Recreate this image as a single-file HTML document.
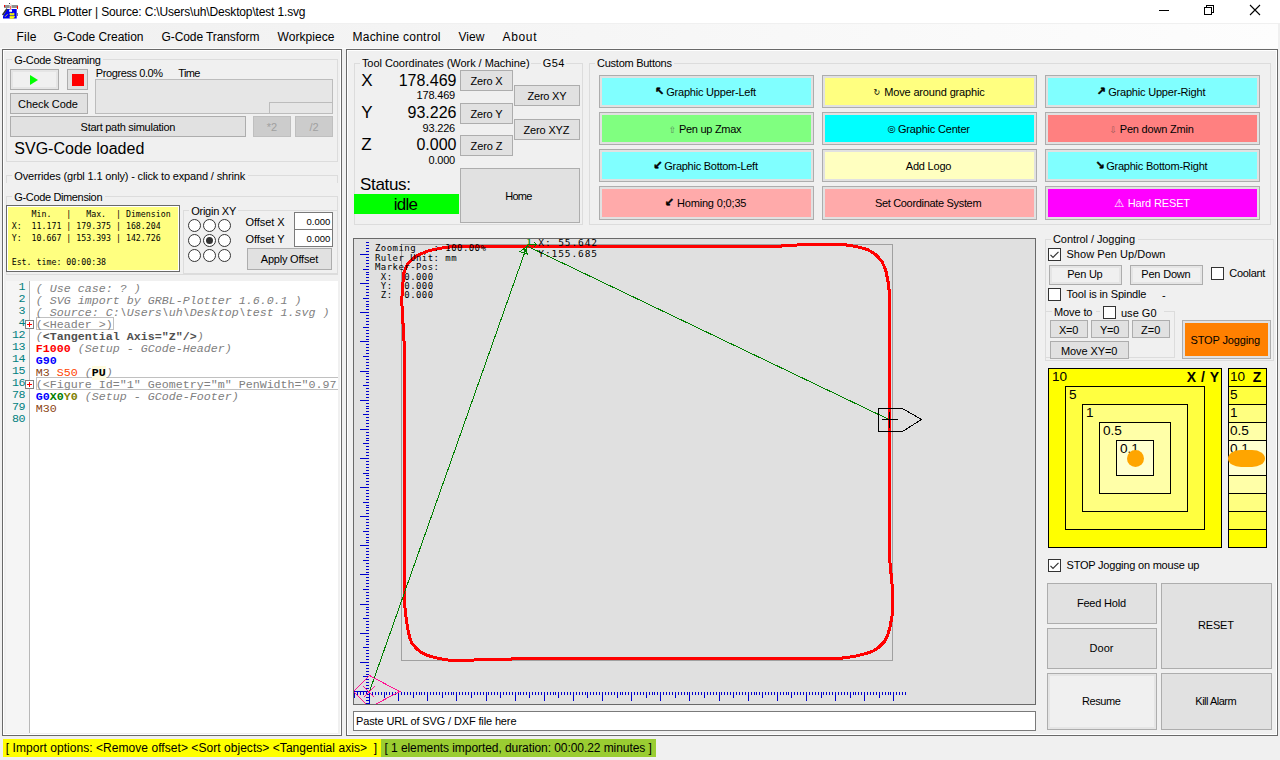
<!DOCTYPE html>
<html lang="en"><head><meta charset="utf-8"><title>GRBL Plotter</title>
<style>
html,body{margin:0;padding:0}
body{width:1280px;height:760px;overflow:hidden;background:#f0f0f0;position:relative;font-family:"Liberation Sans",sans-serif;font-size:11px;color:#000}
div,span.t,svg.a,.a{position:absolute;box-sizing:border-box}
span.t{white-space:pre;display:block}
.gb{border:1px solid #dcdcdc}
.btn{background:#e1e1e1;border:1px solid #adadad}
.btn2{background:#f0f0f0;border:1px solid #adadad;box-shadow:inset 0 0 0 2px #e5e5e5}
.dis{background:#cccccc;border:1px solid #bfbfbf}
.chk{background:#fff;border:1px solid #333}
.rad{background:#fff;border:1px solid #333;border-radius:50%}
.panel{border:1px solid #696969;box-shadow:inset 1px 1px 0 #fff,inset -1px -1px 0 #fff}
.tb{background:#fff;border:1px solid #7a7a7a}

</style></head>
<body>
<div class="" style="left:0px;top:0px;width:1280px;height:23px;background:#fff"></div>
<div class="" style="left:0px;top:23px;width:1278px;height:26px;background:linear-gradient(90deg,#f0f0f0 0%,#fdfdfd 100%);border-top:1px solid #f0f0f0;border-bottom:1px solid #fbfbfb"></div>
<svg class="a" style="left:0;top:0" width="1280" height="23" viewBox="0 0 1280 23"><g shape-rendering="crispEdges"><rect x="4" y="5" width="13.5" height="3" fill="#909090"/><rect x="4" y="5" width="1.3" height="2" fill="#f00"/><rect x="17" y="6" width="1.2" height="3.2" fill="#f00"/><rect x="17" y="13" width="1" height="3" fill="#808080"/></g><path d="M7 9H16.7V18.6H3V16.2Z" fill="#0000f0"/><path d="M7 8.6L2.6 15" stroke="#333" stroke-width="1.6" fill="none"/><rect x="9.6" y="3.8" width="2" height="7" fill="#e8e8e8"/><rect x="10" y="6" width="1" height="3.5" fill="#f66"/><rect x="9.2" y="10" width="2.8" height="1.8" fill="#fff"/><rect x="9" y="3" width="1" height="1" fill="#444"/><path d="M10 13.2Q12 14.3 14 13.2V14.8H10ZM10 16.2H14.6L13.5 18.2H10ZM5 16.8L7.6 14.2" fill="#ffff00" stroke="#ffff00" stroke-width="0.8"/><g fill="none" stroke="#000" stroke-width="1" shape-rendering="crispEdges"><path d="M1159 10.5H1169"/><rect x="1204.5" y="7.5" width="7" height="7"/><path d="M1206.5 7.5V5.5H1213.5V12.5H1211.5"/></g><path d="M1250 5L1260 15M1260 5L1250 15" stroke="#000" stroke-width="1.1" fill="none"/></svg>
<div class="panel" style="left:2px;top:49px;width:340px;height:687px;"></div>
<div class="panel" style="left:346px;top:49px;width:932px;height:687px;"></div>
<div class="gb" style="left:6px;top:59px;width:332px;height:103px;"></div>
<div class="" style="left:12px;top:53px;width:91px;height:13px;background:#f0f0f0"></div>
<div class="btn2" style="left:10px;top:69px;width:49px;height:21px;"><div class="a" style="left:19px;top:5px;width:0;height:0;border-left:8px solid #00ff00;border-top:5.5px solid transparent;border-bottom:5.5px solid transparent"></div></div>
<div class="btn" style="left:67px;top:69px;width:21px;height:21px;"><div class="a" style="left:4px;top:4px;width:12px;height:12px;background:#ff0000"></div></div>
<div class="" style="left:95px;top:79px;width:238px;height:35px;background:#e6e6e6;border:1px solid #bcbcbc"></div>
<div class="" style="left:269px;top:102px;width:64px;height:12px;background:#e6e6e6;border:1px solid #bcbcbc"></div>
<div class="btn" style="left:10px;top:93px;width:78px;height:21px;"></div>
<div class="btn" style="left:10px;top:116px;width:236px;height:21px;"></div>
<div class="dis" style="left:253px;top:116px;width:38px;height:21px;"></div>
<div class="dis" style="left:295px;top:116px;width:38px;height:21px;"></div>
<div class="" style="left:6px;top:175px;width:332px;height:8px;border:1px solid #dcdcdc;border-bottom:none"></div>
<div class="" style="left:12px;top:169px;width:236px;height:13px;background:#f0f0f0"></div>
<div class="gb" style="left:6px;top:196px;width:332px;height:79px;"></div>
<div class="" style="left:12px;top:191px;width:93px;height:13px;background:#f0f0f0"></div>
<div class="" style="left:6px;top:205px;width:174px;height:67px;background:#ffff80;border:1px solid #696969;box-shadow:inset 1px 1px 0 #fff,inset -1px -1px 0 #fff"></div>
<div class="gb" style="left:183px;top:210px;width:155px;height:64px;"></div>
<div class="" style="left:189px;top:204px;width:49px;height:13px;background:#f0f0f0"></div>
<div class="rad" style="left:188.0px;top:219.0px;width:13px;height:13px;"></div>
<div class="rad" style="left:203.0px;top:219.0px;width:13px;height:13px;"></div>
<div class="rad" style="left:218.0px;top:219.0px;width:13px;height:13px;"></div>
<div class="rad" style="left:188.0px;top:234.0px;width:13px;height:13px;"></div>
<div class="rad" style="left:203.0px;top:234.0px;width:13px;height:13px;"><div class="a" style="left:2px;top:2px;width:7px;height:7px;border-radius:50%;background:#333"></div></div>
<div class="rad" style="left:218.0px;top:234.0px;width:13px;height:13px;"></div>
<div class="rad" style="left:188.0px;top:249.0px;width:13px;height:13px;"></div>
<div class="rad" style="left:203.0px;top:249.0px;width:13px;height:13px;"></div>
<div class="rad" style="left:218.0px;top:249.0px;width:13px;height:13px;"></div>
<div class="tb" style="left:294px;top:212px;width:39px;height:18px;"></div>
<div class="tb" style="left:294px;top:229px;width:39px;height:18px;"></div>
<div class="btn" style="left:247px;top:248px;width:85px;height:22px;"></div>
<div class="" style="left:6px;top:281px;width:332px;height:452px;background:#fff"></div>
<div class="" style="left:6px;top:281px;width:23px;height:452px;background:#f5f5f5"></div>
<div class="" style="left:29px;top:281px;width:1px;height:452px;background:#b8b8b8"></div>
<div class="clip" style="left:36px;top:281px;width:302px;height:452px;overflow:hidden"></div>
<div class="" style="left:25px;top:320px;width:9px;height:9px;background:#fff;border:1px solid #808080"><div class="a" style="left:1px;top:3px;width:5px;height:1px;background:#f00"></div><div class="a" style="left:3px;top:1px;width:1px;height:5px;background:#f00"></div></div>
<div class="" style="left:25px;top:380px;width:9px;height:9px;background:#fff;border:1px solid #808080"><div class="a" style="left:1px;top:3px;width:5px;height:1px;background:#f00"></div><div class="a" style="left:3px;top:1px;width:1px;height:5px;background:#f00"></div></div>
<div class="" style="left:36px;top:317px;width:78px;height:13px;border:1px solid #c0c0c0"></div>
<div class="" style="left:36px;top:377px;width:310px;height:13px;border:1px solid #c0c0c0;border-right:none;width:302px"></div>
<div class="gb" style="left:354px;top:63px;width:229px;height:162px;"></div>
<div class="" style="left:360px;top:57px;width:171px;height:13px;background:#f0f0f0"></div>
<div class="" style="left:541px;top:57px;width:25px;height:13px;background:#f0f0f0"></div>
<div class="btn" style="left:460px;top:70px;width:53px;height:21px;"></div>
<div class="btn" style="left:460px;top:103px;width:53px;height:21px;"></div>
<div class="btn" style="left:460px;top:135px;width:53px;height:21px;"></div>
<div class="btn" style="left:514px;top:85px;width:66px;height:21px;"></div>
<div class="btn" style="left:514px;top:119px;width:66px;height:21px;"></div>
<div class="btn" style="left:460px;top:168px;width:120px;height:55px;"></div>
<div class="" style="left:354px;top:194px;width:105px;height:20px;background:#00ff00"></div>
<div class="gb" style="left:589px;top:63px;width:682px;height:162px;"></div>
<div class="" style="left:595px;top:57px;width:79px;height:13px;background:#f0f0f0"></div>
<div class="btn" style="left:599px;top:75px;width:215px;height:33px;"><div class="a" style="left:2px;top:2px;right:2px;bottom:2px;background:#80ffff"></div></div>
<div class="btn" style="left:822px;top:75px;width:215px;height:33px;"><div class="a" style="left:2px;top:2px;right:2px;bottom:2px;background:#ffff80"></div></div>
<div class="btn" style="left:1045px;top:75px;width:215px;height:33px;"><div class="a" style="left:2px;top:2px;right:2px;bottom:2px;background:#80ffff"></div></div>
<div class="btn" style="left:599px;top:112px;width:215px;height:33px;"><div class="a" style="left:2px;top:2px;right:2px;bottom:2px;background:#80ff80"></div></div>
<div class="btn" style="left:822px;top:112px;width:215px;height:33px;"><div class="a" style="left:2px;top:2px;right:2px;bottom:2px;background:#00ffff"></div></div>
<div class="btn" style="left:1045px;top:112px;width:215px;height:33px;"><div class="a" style="left:2px;top:2px;right:2px;bottom:2px;background:#ff8080"></div></div>
<div class="btn" style="left:599px;top:149px;width:215px;height:33px;"><div class="a" style="left:2px;top:2px;right:2px;bottom:2px;background:#80ffff"></div></div>
<div class="btn" style="left:822px;top:149px;width:215px;height:33px;"><div class="a" style="left:2px;top:2px;right:2px;bottom:2px;background:#ffffc0"></div></div>
<div class="btn" style="left:1045px;top:149px;width:215px;height:33px;"><div class="a" style="left:2px;top:2px;right:2px;bottom:2px;background:#80ffff"></div></div>
<div class="btn" style="left:599px;top:186px;width:215px;height:34px;"><div class="a" style="left:2px;top:2px;right:2px;bottom:2px;background:#ffaaaa"></div></div>
<div class="btn" style="left:822px;top:186px;width:215px;height:34px;"><div class="a" style="left:2px;top:2px;right:2px;bottom:2px;background:#ffaaaa"></div></div>
<div class="btn" style="left:1045px;top:186px;width:215px;height:34px;"><div class="a" style="left:2px;top:2px;right:2px;bottom:2px;background:#ff00ff"></div></div>
<div class="" style="left:353px;top:238px;width:683px;height:467px;background:#e0e0e0;border:1px solid #696969"></div>
<div class="tb" style="left:353px;top:711px;width:683px;height:20px;"></div>
<div class="gb" style="left:1045px;top:239px;width:229px;height:122px;"></div>
<div class="" style="left:1051px;top:233px;width:87px;height:13px;background:#f0f0f0"></div>
<div class="chk" style="left:1048px;top:248px;width:13px;height:13px;"><svg class="a" style="left:0;top:0" width="11" height="11" viewBox="0 0 11 11"><path d="M1.5 5.8 L4 8.3 L9.5 2.8" fill="none" stroke="#333" stroke-width="1.2"/></svg></div>
<div class="btn2" style="left:1049px;top:265px;width:73px;height:20px;"></div>
<div class="btn2" style="left:1130px;top:265px;width:73px;height:20px;"></div>
<div class="chk" style="left:1211px;top:267px;width:13px;height:13px;"></div>
<div class="chk" style="left:1048px;top:288px;width:13px;height:13px;"></div>
<div class="gb" style="left:1045px;top:311px;width:130px;height:47px;"></div>
<div class="" style="left:1052px;top:305px;width:44px;height:13px;background:#f0f0f0"></div>
<div class="" style="left:1100px;top:305px;width:64px;height:13px;background:#f0f0f0"></div>
<div class="chk" style="left:1103px;top:306px;width:13px;height:13px;"></div>
<div class="btn" style="left:1050px;top:320px;width:38px;height:18px;"></div>
<div class="btn" style="left:1091px;top:320px;width:38px;height:18px;"></div>
<div class="btn" style="left:1132px;top:320px;width:38px;height:18px;"></div>
<div class="btn" style="left:1050px;top:341px;width:79px;height:18px;"></div>
<div class="btn" style="left:1182px;top:320px;width:89px;height:39px;"><div class="a" style="left:2px;top:2px;right:2px;bottom:2px;background:#ff8000"></div></div>
<div class="" style="left:1048px;top:368px;width:174px;height:180px;background:#ffff00;border:1px solid #000"></div>
<div class="" style="left:1065px;top:386px;width:140px;height:144px;background:#ffff40;border:1px solid #000"></div>
<div class="" style="left:1082px;top:404px;width:106px;height:108px;background:#ffff80;border:1px solid #000"></div>
<div class="" style="left:1099px;top:422px;width:72px;height:72px;background:#ffffa8;border:1px solid #000"></div>
<div class="" style="left:1116px;top:440px;width:38px;height:36px;background:#ffffd0;border:1px solid #000"></div>
<div class="" style="left:1228px;top:368px;width:39px;height:180px;background:#ffff00;border:1px solid #000"></div>
<div class="" style="left:1229px;top:369px;width:37px;height:18px;background:#ffff00;border-bottom:1px solid #000"></div>
<div class="" style="left:1229px;top:387px;width:37px;height:18px;background:#ffff40;border-bottom:1px solid #000"></div>
<div class="" style="left:1229px;top:405px;width:37px;height:18px;background:#ffff80;border-bottom:1px solid #000"></div>
<div class="" style="left:1229px;top:423px;width:37px;height:18px;background:#ffffa8;border-bottom:1px solid #000"></div>
<div class="" style="left:1229px;top:441px;width:37px;height:35px;background:#ffffd0;border-bottom:1px solid #000"></div>
<div class="" style="left:1229px;top:476px;width:37px;height:18px;background:#ffffa8;border-bottom:1px solid #000"></div>
<div class="" style="left:1229px;top:494px;width:37px;height:18px;background:#ffff80;border-bottom:1px solid #000"></div>
<div class="" style="left:1229px;top:512px;width:37px;height:18px;background:#ffff40;border-bottom:1px solid #000"></div>
<div class="" style="left:1229px;top:530px;width:37px;height:17px;background:#ffff00"></div>
<div class="chk" style="left:1048px;top:559px;width:13px;height:13px;"><svg class="a" style="left:0;top:0" width="11" height="11" viewBox="0 0 11 11"><path d="M1.5 5.8 L4 8.3 L9.5 2.8" fill="none" stroke="#333" stroke-width="1.2"/></svg></div>
<div class="btn" style="left:1047px;top:583px;width:110px;height:41px;"></div>
<div class="btn" style="left:1047px;top:628px;width:110px;height:41px;"></div>
<div class="btn" style="left:1161px;top:583px;width:111px;height:86px;"></div>
<div class="btn2" style="left:1047px;top:673px;width:110px;height:57px;"></div>
<div class="btn" style="left:1161px;top:673px;width:111px;height:57px;"></div>
<div class="" style="left:3px;top:739px;width:378px;height:18px;background:#ffff00"></div>
<div class="" style="left:381px;top:739px;width:275px;height:18px;background:#9acd32"></div>
<svg class="a" style="left:354px;top:239px" width="681" height="465" viewBox="354 239 681 465">
<rect x="401.5" y="244.5" width="491" height="416" fill="none" stroke="#a0a0a0" stroke-width="1" shape-rendering="crispEdges"/>
<path d="M369.50 692.0v9M372.41 692.0v3M375.33 692.0v3M378.24 692.0v3M381.15 692.0v3M384.06 692.0v6M386.98 692.0v3M389.89 692.0v3M392.80 692.0v3M395.72 692.0v3M398.63 692.0v9M401.54 692.0v3M404.46 692.0v3M407.37 692.0v3M410.28 692.0v3M413.19 692.0v6M416.11 692.0v3M419.02 692.0v3M421.93 692.0v3M424.85 692.0v3M427.76 692.0v9M430.67 692.0v3M433.59 692.0v3M436.50 692.0v3M439.41 692.0v3M442.32 692.0v6M445.24 692.0v3M448.15 692.0v3M451.06 692.0v3M453.98 692.0v3M456.89 692.0v9M459.80 692.0v3M462.72 692.0v3M465.63 692.0v3M468.54 692.0v3M471.45 692.0v6M474.37 692.0v3M477.28 692.0v3M480.19 692.0v3M483.11 692.0v3M486.02 692.0v9M488.93 692.0v3M491.85 692.0v3M494.76 692.0v3M497.67 692.0v3M500.58 692.0v6M503.50 692.0v3M506.41 692.0v3M509.32 692.0v3M512.24 692.0v3M515.15 692.0v9M518.06 692.0v3M520.98 692.0v3M523.89 692.0v3M526.80 692.0v3M529.72 692.0v6M532.63 692.0v3M535.54 692.0v3M538.45 692.0v3M541.37 692.0v3M544.28 692.0v9M547.19 692.0v3M550.11 692.0v3M553.02 692.0v3M555.93 692.0v3M558.85 692.0v6M561.76 692.0v3M564.67 692.0v3M567.58 692.0v3M570.50 692.0v3M573.41 692.0v9M576.32 692.0v3M579.24 692.0v3M582.15 692.0v3M585.06 692.0v3M587.98 692.0v6M590.89 692.0v3M593.80 692.0v3M596.71 692.0v3M599.63 692.0v3M602.54 692.0v9M605.45 692.0v3M608.37 692.0v3M611.28 692.0v3M614.19 692.0v3M617.11 692.0v6M620.02 692.0v3M622.93 692.0v3M625.84 692.0v3M628.76 692.0v3M631.67 692.0v9M634.58 692.0v3M637.50 692.0v3M640.41 692.0v3M643.32 692.0v3M646.23 692.0v6M649.15 692.0v3M652.06 692.0v3M654.97 692.0v3M657.89 692.0v3M660.80 692.0v9M663.71 692.0v3M666.63 692.0v3M669.54 692.0v3M672.45 692.0v3M675.37 692.0v6M678.28 692.0v3M681.19 692.0v3M684.10 692.0v3M687.02 692.0v3M689.93 692.0v9M692.84 692.0v3M695.76 692.0v3M698.67 692.0v3M701.58 692.0v3M704.50 692.0v6M707.41 692.0v3M710.32 692.0v3M713.23 692.0v3M716.15 692.0v3M719.06 692.0v9M721.97 692.0v3M724.89 692.0v3M727.80 692.0v3M730.71 692.0v3M733.62 692.0v6M736.54 692.0v3M739.45 692.0v3M742.36 692.0v3M745.28 692.0v3M748.19 692.0v9M751.10 692.0v3M754.02 692.0v3M756.93 692.0v3M759.84 692.0v3M762.75 692.0v6M765.67 692.0v3M768.58 692.0v3M771.49 692.0v3M774.41 692.0v3M777.32 692.0v9M780.23 692.0v3M783.15 692.0v3M786.06 692.0v3M788.97 692.0v3M791.88 692.0v6M794.80 692.0v3M797.71 692.0v3M800.62 692.0v3M803.54 692.0v3M806.45 692.0v9M809.36 692.0v3M812.28 692.0v3M815.19 692.0v3M818.10 692.0v3M821.01 692.0v6M823.93 692.0v3M826.84 692.0v3M829.75 692.0v3M832.67 692.0v3M835.58 692.0v9M838.49 692.0v3M841.41 692.0v3M844.32 692.0v3M847.23 692.0v3M850.14 692.0v6M853.06 692.0v3M855.97 692.0v3M858.88 692.0v3M861.80 692.0v3M864.71 692.0v9M867.62 692.0v3M870.54 692.0v3M873.45 692.0v3M876.36 692.0v3M879.27 692.0v6M882.19 692.0v3M885.10 692.0v3M888.01 692.0v3M890.93 692.0v3M893.84 692.0v9M896.75 692.0v3M899.67 692.0v3M902.58 692.0v3M905.49 692.0v3M369.0 691.50h-9M369.0 688.59h-3M369.0 685.67h-3M369.0 682.76h-3M369.0 679.85h-3M369.0 676.93h-6M369.0 674.02h-3M369.0 671.11h-3M369.0 668.20h-3M369.0 665.28h-3M369.0 662.37h-9M369.0 659.46h-3M369.0 656.54h-3M369.0 653.63h-3M369.0 650.72h-3M369.0 647.80h-6M369.0 644.89h-3M369.0 641.98h-3M369.0 639.07h-3M369.0 636.15h-3M369.0 633.24h-9M369.0 630.33h-3M369.0 627.41h-3M369.0 624.50h-3M369.0 621.59h-3M369.0 618.67h-6M369.0 615.76h-3M369.0 612.85h-3M369.0 609.94h-3M369.0 607.02h-3M369.0 604.11h-9M369.0 601.20h-3M369.0 598.28h-3M369.0 595.37h-3M369.0 592.46h-3M369.0 589.54h-6M369.0 586.63h-3M369.0 583.72h-3M369.0 580.81h-3M369.0 577.89h-3M369.0 574.98h-9M369.0 572.07h-3M369.0 569.15h-3M369.0 566.24h-3M369.0 563.33h-3M369.0 560.41h-6M369.0 557.50h-3M369.0 554.59h-3M369.0 551.68h-3M369.0 548.76h-3M369.0 545.85h-9M369.0 542.94h-3M369.0 540.02h-3M369.0 537.11h-3M369.0 534.20h-3M369.0 531.28h-6M369.0 528.37h-3M369.0 525.46h-3M369.0 522.55h-3M369.0 519.63h-3M369.0 516.72h-9M369.0 513.81h-3M369.0 510.89h-3M369.0 507.98h-3M369.0 505.07h-3M369.0 502.15h-6M369.0 499.24h-3M369.0 496.33h-3M369.0 493.42h-3M369.0 490.50h-3M369.0 487.59h-9M369.0 484.68h-3M369.0 481.76h-3M369.0 478.85h-3M369.0 475.94h-3M369.0 473.02h-6M369.0 470.11h-3M369.0 467.20h-3M369.0 464.29h-3M369.0 461.37h-3M369.0 458.46h-9M369.0 455.55h-3M369.0 452.63h-3M369.0 449.72h-3M369.0 446.81h-3M369.0 443.89h-6M369.0 440.98h-3M369.0 438.07h-3M369.0 435.16h-3M369.0 432.24h-3M369.0 429.33h-9M369.0 426.42h-3M369.0 423.50h-3M369.0 420.59h-3M369.0 417.68h-3M369.0 414.77h-6M369.0 411.85h-3M369.0 408.94h-3M369.0 406.03h-3M369.0 403.11h-3M369.0 400.20h-9M369.0 397.29h-3M369.0 394.37h-3M369.0 391.46h-3M369.0 388.55h-3M369.0 385.64h-6M369.0 382.72h-3M369.0 379.81h-3M369.0 376.90h-3M369.0 373.98h-3M369.0 371.07h-9M369.0 368.16h-3M369.0 365.24h-3M369.0 362.33h-3M369.0 359.42h-3M369.0 356.50h-6M369.0 353.59h-3M369.0 350.68h-3M369.0 347.77h-3M369.0 344.85h-3M369.0 341.94h-9M369.0 339.03h-3M369.0 336.11h-3M369.0 333.20h-3M369.0 330.29h-3M369.0 327.38h-6M369.0 324.46h-3M369.0 321.55h-3M369.0 318.64h-3M369.0 315.72h-3M369.0 312.81h-9M369.0 309.90h-3M369.0 306.98h-3M369.0 304.07h-3M369.0 301.16h-3M369.0 298.25h-6M369.0 295.33h-3M369.0 292.42h-3M369.0 289.51h-3M369.0 286.59h-3M369.0 283.68h-9M369.0 280.77h-3M369.0 277.85h-3M369.0 274.94h-3M369.0 272.03h-3M369.0 269.12h-6M369.0 266.20h-3M369.0 263.29h-3M369.0 260.38h-3M369.0 257.46h-3M369.0 254.55h-9M369.0 251.64h-3M369.0 248.72h-3M369.0 245.81h-3M369.0 242.90h-3M366.59 692.0v3M363.67 692.0v3M360.76 692.0v3M357.85 692.0v3M354.94 692.0v6M370.0 694.41h-4M370.0 697.33h-4M370.0 700.24h-4M370.0 703.15h-4" stroke="#0000cd" stroke-width="1" fill="none" shape-rendering="crispEdges"/>
<path d="M354 691.5H370.0M369.5 691.5V704" stroke="#0000cd" stroke-width="1.4" fill="none" shape-rendering="crispEdges"/>
<path d="M527 246.4 L775 246.4 L790 245.5 L803 244.6 L843.7 244.5 L849.2 245.5 L856.3 246.5 L867.4 249.5 L875.3 254.2 L881.6 260.9 L885.6 269.6 L887.9 280.7 L889.5 293.3 L889.7 560 L892.6 590 L892.6 612 L891.9 616.6 L890 627 L887.9 634.5 L884.2 641.8 L879 647.1 L872.6 651.3 L864.2 654 L855.8 656 L846.3 657.6 L839 658.4 L520 658.5 L500 659.7 L449.7 660.3 L443.4 659.2 L435 657.6 L427.6 655.5 L421.3 652.4 L416 648.2 L411.8 642.9 L409.7 637.6 L407.4 627 L406 616.6 L404.8 606 L404.5 585 L404.5 350 L401.7 300 L403.7 273 L407.6 263.7 L416.3 255.8 L429 250.6 L446.3 247.2 L460 246.4 Z" fill="none" stroke="#ff0000" stroke-width="3" stroke-linejoin="round" shape-rendering="crispEdges"/>
<g font-family="'DejaVu Sans Mono', monospace" font-size="9" letter-spacing="0.44" fill="#000" style="white-space:pre">
<text x="375" y="251.3">Zooming   : 100.00%</text>
<text x="375" y="260.7">Ruler Unit: mm</text>
<text x="375" y="270.1">Marker-Pos:</text>
<text x="375" y="279.5"> X:  0.000</text>
<text x="375" y="288.9"> Y:  0.000</text>
<text x="375" y="298.3"> Z:  0.000</text>
</g>
<path d="M369.5 691.5L527 246L889 419.5" fill="none" stroke="#008000" stroke-width="1" shape-rendering="crispEdges"/>
<path d="M526.2 247L520 251.6L527.2 254.2ZM524.6 248.6V252.5M526.5 246.5L528.5 244.5H536.5M534.5 242.5L536.8 244.5L534.5 246.8" fill="none" stroke="#008000" stroke-width="1" shape-rendering="crispEdges"/>
<text x="526.6" y="245.2" font-family="'DejaVu Sans Mono', monospace" font-size="8.5" font-weight="bold" fill="#008000">1</text>
<g font-family="'DejaVu Sans Mono', monospace" font-size="9.5" letter-spacing="0.9" fill="#000" style="white-space:pre">
<text x="538.3" y="245.8">X: 55.642</text><text x="538.3" y="256.8">Y:155.685</text></g>
<path d="M353.5 691.5L369.5 675.5L399.5 691.5L369.5 707.5ZM363.5 686.5l11 11M374.5 686.5l-11 11" fill="none" stroke="#ff1493" stroke-width="1" shape-rendering="crispEdges"/>
<path d="M878.5 408.5H902.5L921.5 419.5L902.5 431.5H878.5ZM882 419.5h16M889.5 411.5v16" fill="none" stroke="#000" stroke-width="1" shape-rendering="crispEdges"/>
</svg>
<span class="t" style="font-family:'Liberation Sans', sans-serif;font-size:12px;color:#000;letter-spacing:-0.156px;left:23.50px;top:3.50px;line-height:16px;">GRBL Plotter | Source: C:\Users\uh\Desktop\test 1.svg</span>
<span class="t" style="font-family:'Liberation Sans', sans-serif;font-size:12px;color:#000;letter-spacing:0.219px;left:16.50px;top:28.50px;line-height:16px;">File</span>
<span class="t" style="font-family:'Liberation Sans', sans-serif;font-size:12px;color:#000;letter-spacing:-0.051px;left:53.50px;top:28.50px;line-height:16px;">G-Code Creation</span>
<span class="t" style="font-family:'Liberation Sans', sans-serif;font-size:12px;color:#000;letter-spacing:-0.092px;left:161.50px;top:28.50px;line-height:16px;">G-Code Transform</span>
<span class="t" style="font-family:'Liberation Sans', sans-serif;font-size:12px;color:#000;letter-spacing:0.066px;left:277.50px;top:28.50px;line-height:16px;">Workpiece</span>
<span class="t" style="font-family:'Liberation Sans', sans-serif;font-size:12px;color:#000;letter-spacing:0.234px;left:352.50px;top:28.50px;line-height:16px;">Machine control</span>
<span class="t" style="font-family:'Liberation Sans', sans-serif;font-size:12px;color:#000;letter-spacing:0.068px;left:458.50px;top:28.50px;line-height:16px;">View</span>
<span class="t" style="font-family:'Liberation Sans', sans-serif;font-size:12px;color:#000;letter-spacing:0.660px;left:502.50px;top:28.50px;line-height:16px;">About</span>
<span class="t" style="font-family:'Liberation Sans', sans-serif;font-size:11px;color:#000;letter-spacing:-0.348px;left:14.30px;top:52.50px;line-height:14px;">G-Code Streaming</span>
<span class="t" style="font-family:'Liberation Sans', sans-serif;font-size:11px;color:#000;letter-spacing:-0.405px;left:95.80px;top:65.50px;line-height:14px;">Progress 0.0%</span>
<span class="t" style="font-family:'Liberation Sans', sans-serif;font-size:11px;color:#000;letter-spacing:-0.616px;left:178.20px;top:65.50px;line-height:14px;">Time</span>
<span class="t" style="font-family:'Liberation Sans', sans-serif;font-size:11px;color:#000;letter-spacing:-0.061px;left:18.00px;top:96.50px;line-height:14px;">Check Code</span>
<span class="t" style="font-family:'Liberation Sans', sans-serif;font-size:11px;color:#000;letter-spacing:-0.274px;left:80.60px;top:119.50px;line-height:14px;">Start path simulation</span>
<span class="t" style="font-family:'Liberation Sans', sans-serif;font-size:11px;color:#a0a0a0;left:266.80px;top:119.50px;line-height:14px;">*2</span>
<span class="t" style="font-family:'Liberation Sans', sans-serif;font-size:11px;color:#a0a0a0;left:309.41px;top:119.50px;line-height:14px;">/2</span>
<span class="t" style="font-family:'Liberation Sans', sans-serif;font-size:16px;color:#000;letter-spacing:0.010px;left:14.30px;top:137.90px;line-height:21px;">SVG-Code loaded</span>
<span class="t" style="font-family:'Liberation Sans', sans-serif;font-size:11px;color:#000;letter-spacing:-0.160px;left:14.30px;top:168.90px;line-height:14px;">Overrides (grbl 1.1 only) - click to expand / shrink</span>
<span class="t" style="font-family:'Liberation Sans', sans-serif;font-size:11px;color:#000;letter-spacing:-0.356px;left:14.30px;top:190.30px;line-height:14px;">G-Code Dimension</span>
<span class="t" style="font-family:'DejaVu Sans Mono', monospace;font-size:8.25px;color:#000;left:11.70px;top:208.50px;line-height:11px;">    Min.   |   Max.  | Dimension</span>
<span class="t" style="font-family:'DejaVu Sans Mono', monospace;font-size:8.25px;color:#000;left:11.70px;top:220.50px;line-height:11px;">X:  11.171 | 179.375 | 168.204</span>
<span class="t" style="font-family:'DejaVu Sans Mono', monospace;font-size:8.25px;color:#000;left:11.70px;top:232.50px;line-height:11px;">Y:  10.667 | 153.393 | 142.726</span>
<span class="t" style="font-family:'DejaVu Sans Mono', monospace;font-size:8.25px;color:#000;left:11.70px;top:256.50px;line-height:11px;">Est. time: 00:00:38</span>
<span class="t" style="font-family:'Liberation Sans', sans-serif;font-size:11px;color:#000;letter-spacing:-0.247px;left:191.20px;top:203.80px;line-height:14px;">Origin XY</span>
<span class="t" style="font-family:'Liberation Sans', sans-serif;font-size:11px;color:#000;letter-spacing:-0.078px;left:245.50px;top:215.40px;line-height:14px;">Offset X</span>
<span class="t" style="font-family:'Liberation Sans', sans-serif;font-size:11px;color:#000;letter-spacing:-0.049px;left:245.50px;top:232.30px;line-height:14px;">Offset Y</span>
<span class="t" style="font-family:'Liberation Sans', sans-serif;font-size:9.5px;color:#000;left:306.52px;top:215.50px;line-height:12px;">0.000</span>
<span class="t" style="font-family:'Liberation Sans', sans-serif;font-size:9.5px;color:#000;left:306.52px;top:232.50px;line-height:12px;">0.000</span>
<span class="t" style="font-family:'Liberation Sans', sans-serif;font-size:11px;color:#000;letter-spacing:-0.202px;left:260.75px;top:252.00px;line-height:14px;">Apply Offset</span>
<span class="t" style="font-family:'Liberation Mono', monospace;font-size:11.667px;color:#008080;left:18.50px;top:280.20px;line-height:15px;letter-spacing:-0.5px;">1</span>
<span class="t" style="font-family:'Liberation Mono', monospace;font-size:11.667px;color:#000;left:35.80px;top:281.70px;line-height:15px;max-width:301.5px;overflow:hidden;"><i style="color:#808080">( Use case: ? )</i></span>
<span class="t" style="font-family:'Liberation Mono', monospace;font-size:11.667px;color:#008080;left:18.50px;top:292.20px;line-height:15px;letter-spacing:-0.5px;">2</span>
<span class="t" style="font-family:'Liberation Mono', monospace;font-size:11.667px;color:#000;left:35.80px;top:293.70px;line-height:15px;max-width:301.5px;overflow:hidden;"><i style="color:#808080">( SVG import by GRBL-Plotter 1.6.0.1 )</i></span>
<span class="t" style="font-family:'Liberation Mono', monospace;font-size:11.667px;color:#008080;left:18.50px;top:304.20px;line-height:15px;letter-spacing:-0.5px;">3</span>
<span class="t" style="font-family:'Liberation Mono', monospace;font-size:11.667px;color:#000;left:35.80px;top:305.70px;line-height:15px;max-width:301.5px;overflow:hidden;"><i style="color:#808080">( Source: C:\Users\uh\Desktop\test 1.svg )</i></span>
<span class="t" style="font-family:'Liberation Mono', monospace;font-size:11.667px;color:#008080;left:18.50px;top:316.20px;line-height:15px;letter-spacing:-0.5px;">4</span>
<span class="t" style="font-family:'Liberation Mono', monospace;font-size:11.667px;color:#000;left:35.80px;top:317.70px;line-height:15px;max-width:301.5px;overflow:hidden;"><span style="color:#808080">(&lt;Header &gt;)</span></span>
<span class="t" style="font-family:'Liberation Mono', monospace;font-size:11.667px;color:#008080;left:12.00px;top:328.20px;line-height:15px;letter-spacing:-0.5px;">12</span>
<span class="t" style="font-family:'Liberation Mono', monospace;font-size:11.667px;color:#000;left:35.80px;top:329.70px;line-height:15px;max-width:301.5px;overflow:hidden;"><i style="color:#808080">(</i><b style="color:#505050">&lt;Tangential Axis="Z"/&gt;</b><i style="color:#808080">)</i></span>
<span class="t" style="font-family:'Liberation Mono', monospace;font-size:11.667px;color:#008080;left:12.00px;top:340.20px;line-height:15px;letter-spacing:-0.5px;">13</span>
<span class="t" style="font-family:'Liberation Mono', monospace;font-size:11.667px;color:#000;left:35.80px;top:341.70px;line-height:15px;max-width:301.5px;overflow:hidden;"><b style="color:#ff0000">F1000</b> <i style="color:#808080">(Setup - GCode-Header)</i></span>
<span class="t" style="font-family:'Liberation Mono', monospace;font-size:11.667px;color:#008080;left:12.00px;top:352.20px;line-height:15px;letter-spacing:-0.5px;">14</span>
<span class="t" style="font-family:'Liberation Mono', monospace;font-size:11.667px;color:#000;left:35.80px;top:353.70px;line-height:15px;max-width:301.5px;overflow:hidden;"><b style="color:#0000ff">G90</b></span>
<span class="t" style="font-family:'Liberation Mono', monospace;font-size:11.667px;color:#008080;left:12.00px;top:364.20px;line-height:15px;letter-spacing:-0.5px;">15</span>
<span class="t" style="font-family:'Liberation Mono', monospace;font-size:11.667px;color:#000;left:35.80px;top:365.70px;line-height:15px;max-width:301.5px;overflow:hidden;"><span style="color:#8b4513">M3</span> <span style="color:#ff4500">S50</span> <i style="color:#808080">(</i><b style="color:#000;background:#fffbe0">PU</b><i style="color:#808080">)</i></span>
<span class="t" style="font-family:'Liberation Mono', monospace;font-size:11.667px;color:#008080;left:12.00px;top:376.20px;line-height:15px;letter-spacing:-0.5px;">16</span>
<span class="t" style="font-family:'Liberation Mono', monospace;font-size:11.667px;color:#000;left:35.80px;top:377.70px;line-height:15px;max-width:301.5px;overflow:hidden;"><span style="color:#808080">(&lt;Figure Id="1" Geometry="m" PenWidth="0.97</span></span>
<span class="t" style="font-family:'Liberation Mono', monospace;font-size:11.667px;color:#008080;left:12.00px;top:388.20px;line-height:15px;letter-spacing:-0.5px;">78</span>
<span class="t" style="font-family:'Liberation Mono', monospace;font-size:11.667px;color:#000;left:35.80px;top:389.70px;line-height:15px;max-width:301.5px;overflow:hidden;"><b style="color:#0000ff">G0</b><b style="color:#008000">X0</b><b style="color:#808000">Y0</b> <i style="color:#808080">(Setup - GCode-Footer)</i></span>
<span class="t" style="font-family:'Liberation Mono', monospace;font-size:11.667px;color:#008080;left:12.00px;top:400.20px;line-height:15px;letter-spacing:-0.5px;">79</span>
<span class="t" style="font-family:'Liberation Mono', monospace;font-size:11.667px;color:#000;left:35.80px;top:401.70px;line-height:15px;max-width:301.5px;overflow:hidden;"><span style="color:#8b4513">M30</span></span>
<span class="t" style="font-family:'Liberation Mono', monospace;font-size:11.667px;color:#008080;left:12.00px;top:412.20px;line-height:15px;letter-spacing:-0.5px;">80</span>
<span class="t" style="font-family:'Liberation Sans', sans-serif;font-size:11px;color:#000;letter-spacing:-0.046px;left:361.90px;top:55.90px;line-height:14px;">Tool Coordinates (Work / Machine)</span>
<span class="t" style="font-family:'Liberation Sans', sans-serif;font-size:11px;color:#000;letter-spacing:0.502px;left:542.70px;top:55.90px;line-height:14px;">G54</span>
<span class="t" style="font-family:'Liberation Sans', sans-serif;font-size:17px;color:#000;left:361.20px;top:69.50px;line-height:22px;">X</span>
<span class="t" style="font-family:'Liberation Sans', sans-serif;font-size:16px;color:#000;left:398.66px;top:70.00px;line-height:21px;">178.469</span>
<span class="t" style="font-family:'Liberation Sans', sans-serif;font-size:11px;color:#000;left:416.62px;top:88.00px;line-height:14px;letter-spacing:-0.2px;">178.469</span>
<span class="t" style="font-family:'Liberation Sans', sans-serif;font-size:17px;color:#000;left:361.20px;top:101.50px;line-height:22px;">Y</span>
<span class="t" style="font-family:'Liberation Sans', sans-serif;font-size:16px;color:#000;left:407.56px;top:102.00px;line-height:21px;">93.226</span>
<span class="t" style="font-family:'Liberation Sans', sans-serif;font-size:11px;color:#000;left:422.55px;top:120.70px;line-height:14px;letter-spacing:-0.2px;">93.226</span>
<span class="t" style="font-family:'Liberation Sans', sans-serif;font-size:17px;color:#000;left:361.20px;top:133.50px;line-height:22px;">Z</span>
<span class="t" style="font-family:'Liberation Sans', sans-serif;font-size:16px;color:#000;left:416.45px;top:134.00px;line-height:21px;">0.000</span>
<span class="t" style="font-family:'Liberation Sans', sans-serif;font-size:11px;color:#000;left:428.47px;top:153.10px;line-height:14px;letter-spacing:-0.2px;">0.000</span>
<span class="t" style="font-family:'Liberation Sans', sans-serif;font-size:11px;color:#000;letter-spacing:-0.203px;left:470.50px;top:73.50px;line-height:14px;">Zero X</span>
<span class="t" style="font-family:'Liberation Sans', sans-serif;font-size:11px;color:#000;letter-spacing:-0.163px;left:470.50px;top:106.50px;line-height:14px;">Zero Y</span>
<span class="t" style="font-family:'Liberation Sans', sans-serif;font-size:11px;color:#000;letter-spacing:-0.081px;left:470.50px;top:138.50px;line-height:14px;">Zero Z</span>
<span class="t" style="font-family:'Liberation Sans', sans-serif;font-size:11px;color:#000;letter-spacing:-0.227px;left:527.50px;top:88.50px;line-height:14px;">Zero XY</span>
<span class="t" style="font-family:'Liberation Sans', sans-serif;font-size:11px;color:#000;letter-spacing:-0.154px;left:523.50px;top:122.50px;line-height:14px;">Zero XYZ</span>
<span class="t" style="font-family:'Liberation Sans', sans-serif;font-size:11px;color:#000;letter-spacing:-0.715px;left:505.20px;top:188.50px;line-height:14px;">Home</span>
<span class="t" style="font-family:'Liberation Sans', sans-serif;font-size:17px;color:#000;letter-spacing:-0.320px;left:360.00px;top:173.50px;line-height:22px;">Status:</span>
<span class="t" style="font-family:'Liberation Sans', sans-serif;font-size:17px;color:#000;letter-spacing:-0.756px;left:393.70px;top:194.00px;line-height:22px;">idle</span>
<span class="t" style="font-family:'Liberation Sans', sans-serif;font-size:11px;color:#000;letter-spacing:-0.267px;left:597.10px;top:55.80px;line-height:14px;">Custom Buttons</span>
<span class="t" style="font-family:'DejaVu Sans', sans-serif;font-size:11px;color:#000;left:654.70px;top:85.00px;line-height:14px;font-weight:bold;-webkit-text-stroke:0.5px #000;">↖</span>
<span class="t" style="font-family:'Liberation Sans', sans-serif;font-size:11px;color:#000;letter-spacing:-0.209px;left:666.20px;top:84.50px;line-height:14px;">Graphic Upper-Left</span>
<span class="t" style="font-family:'DejaVu Sans', sans-serif;font-size:8px;color:#000;left:873.50px;top:87.50px;line-height:10px;">↻</span>
<span class="t" style="font-family:'Liberation Sans', sans-serif;font-size:11px;color:#000;letter-spacing:-0.152px;left:884.20px;top:84.50px;line-height:14px;">Move around graphic</span>
<span class="t" style="font-family:'DejaVu Sans', sans-serif;font-size:11px;color:#000;left:1096.70px;top:85.00px;line-height:14px;font-weight:bold;-webkit-text-stroke:0.5px #000;">↗</span>
<span class="t" style="font-family:'Liberation Sans', sans-serif;font-size:11px;color:#000;letter-spacing:-0.199px;left:1108.20px;top:84.50px;line-height:14px;">Graphic Upper-Right</span>
<span class="t" style="font-family:'DejaVu Sans', sans-serif;font-size:9px;color:#000;left:668.80px;top:123.50px;line-height:12px;color:#5a8a5a;">⇧</span>
<span class="t" style="font-family:'Liberation Sans', sans-serif;font-size:11px;color:#000;letter-spacing:-0.292px;left:679.00px;top:121.50px;line-height:14px;">Pen up Zmax</span>
<span class="t" style="font-family:'DejaVu Sans', sans-serif;font-size:9.5px;color:#000;left:887.60px;top:123.00px;line-height:12px;">◎</span>
<span class="t" style="font-family:'Liberation Sans', sans-serif;font-size:11px;color:#000;letter-spacing:-0.200px;left:898.00px;top:121.50px;line-height:14px;">Graphic Center</span>
<span class="t" style="font-family:'DejaVu Sans', sans-serif;font-size:9px;color:#000;left:1109.50px;top:123.50px;line-height:12px;color:#a05858;">⇩</span>
<span class="t" style="font-family:'Liberation Sans', sans-serif;font-size:11px;color:#000;letter-spacing:-0.203px;left:1119.80px;top:121.50px;line-height:14px;">Pen down Zmin</span>
<span class="t" style="font-family:'DejaVu Sans', sans-serif;font-size:11px;color:#000;left:653.00px;top:159.00px;line-height:14px;font-weight:bold;-webkit-text-stroke:0.5px #000;">↙</span>
<span class="t" style="font-family:'Liberation Sans', sans-serif;font-size:11px;color:#000;letter-spacing:-0.258px;left:664.20px;top:158.50px;line-height:14px;">Graphic Bottom-Left</span>
<span class="t" style="font-family:'Liberation Sans', sans-serif;font-size:11px;color:#000;letter-spacing:-0.201px;left:905.80px;top:158.50px;line-height:14px;">Add Logo</span>
<span class="t" style="font-family:'DejaVu Sans', sans-serif;font-size:11px;color:#000;left:1095.40px;top:159.00px;line-height:14px;font-weight:bold;-webkit-text-stroke:0.5px #000;">↘</span>
<span class="t" style="font-family:'Liberation Sans', sans-serif;font-size:11px;color:#000;letter-spacing:-0.230px;left:1106.20px;top:158.50px;line-height:14px;">Graphic Bottom-Right</span>
<span class="t" style="font-family:'DejaVu Sans', sans-serif;font-size:11px;color:#000;left:664.50px;top:196.00px;line-height:14px;font-weight:bold;-webkit-text-stroke:0.5px #000;">↙</span>
<span class="t" style="font-family:'Liberation Sans', sans-serif;font-size:11px;color:#000;letter-spacing:-0.162px;left:676.90px;top:195.50px;line-height:14px;">Homing 0;0;35</span>
<span class="t" style="font-family:'Liberation Sans', sans-serif;font-size:11px;color:#000;letter-spacing:-0.321px;left:874.90px;top:195.50px;line-height:14px;">Set Coordinate System</span>
<span class="t" style="font-family:'DejaVu Sans', sans-serif;font-size:11.5px;color:#fff;left:1114.10px;top:196.00px;line-height:15px;">⚠</span>
<span class="t" style="font-family:'Liberation Sans', sans-serif;font-size:11px;color:#fff;letter-spacing:-0.131px;left:1127.70px;top:195.50px;line-height:14px;">Hard RESET</span>
<span class="t" style="font-family:'Liberation Sans', sans-serif;font-size:11px;color:#000;letter-spacing:-0.134px;left:356.00px;top:713.50px;line-height:14px;">Paste URL of SVG / DXF file here</span>
<span class="t" style="font-family:'Liberation Sans', sans-serif;font-size:11px;color:#000;letter-spacing:-0.073px;left:1053.00px;top:232.00px;line-height:14px;">Control / Jogging</span>
<span class="t" style="font-family:'Liberation Sans', sans-serif;font-size:11px;color:#000;letter-spacing:0.036px;left:1066.50px;top:246.70px;line-height:14px;">Show Pen Up/Down</span>
<span class="t" style="font-family:'Liberation Sans', sans-serif;font-size:11px;color:#000;letter-spacing:-0.241px;left:1067.25px;top:267.00px;line-height:14px;">Pen Up</span>
<span class="t" style="font-family:'Liberation Sans', sans-serif;font-size:11px;color:#000;letter-spacing:-0.181px;left:1141.25px;top:267.00px;line-height:14px;">Pen Down</span>
<span class="t" style="font-family:'Liberation Sans', sans-serif;font-size:11px;color:#000;letter-spacing:-0.320px;left:1229.30px;top:265.90px;line-height:14px;">Coolant</span>
<span class="t" style="font-family:'Liberation Sans', sans-serif;font-size:11px;color:#000;letter-spacing:-0.151px;left:1066.50px;top:286.80px;line-height:14px;">Tool is in Spindle</span>
<span class="t" style="font-family:'Liberation Sans', sans-serif;font-size:11px;color:#000;left:1162.00px;top:287.50px;line-height:14px;">-</span>
<span class="t" style="font-family:'Liberation Sans', sans-serif;font-size:11px;color:#000;letter-spacing:-0.107px;left:1054.00px;top:304.50px;line-height:14px;">Move to</span>
<span class="t" style="font-family:'Liberation Sans', sans-serif;font-size:11px;color:#000;letter-spacing:0.006px;left:1121.00px;top:305.50px;line-height:14px;">use G0</span>
<span class="t" style="font-family:'Liberation Sans', sans-serif;font-size:11px;color:#000;letter-spacing:-0.345px;left:1059.10px;top:322.50px;line-height:14px;">X=0</span>
<span class="t" style="font-family:'Liberation Sans', sans-serif;font-size:11px;color:#000;letter-spacing:-0.345px;left:1100.10px;top:322.50px;line-height:14px;">Y=0</span>
<span class="t" style="font-family:'Liberation Sans', sans-serif;font-size:11px;color:#000;letter-spacing:-0.033px;left:1141.10px;top:322.50px;line-height:14px;">Z=0</span>
<span class="t" style="font-family:'Liberation Sans', sans-serif;font-size:11px;color:#000;letter-spacing:-0.109px;left:1061.05px;top:343.50px;line-height:14px;">Move XY=0</span>
<span class="t" style="font-family:'Liberation Sans', sans-serif;font-size:11px;color:#000;letter-spacing:-0.140px;left:1190.50px;top:332.50px;line-height:14px;">STOP Jogging</span>
<span class="t" style="font-family:'Liberation Sans', sans-serif;font-size:13.6px;color:#000;left:1052.00px;top:368.20px;line-height:18px;">10</span>
<span class="t" style="font-family:'Liberation Sans', sans-serif;font-size:13.6px;color:#000;left:1069.00px;top:386.20px;line-height:18px;">5</span>
<span class="t" style="font-family:'Liberation Sans', sans-serif;font-size:13.6px;color:#000;left:1086.00px;top:404.20px;line-height:18px;">1</span>
<span class="t" style="font-family:'Liberation Sans', sans-serif;font-size:13.6px;color:#000;left:1103.00px;top:422.20px;line-height:18px;">0.5</span>
<span class="t" style="font-family:'Liberation Sans', sans-serif;font-size:13.6px;color:#000;left:1120.00px;top:440.20px;line-height:18px;">0.1</span>
<span class="t" style="font-family:'Liberation Sans', sans-serif;font-size:13.6px;color:#000;left:1230.00px;top:368.20px;line-height:18px;">10</span>
<span class="t" style="font-family:'Liberation Sans', sans-serif;font-size:13.6px;color:#000;left:1230.00px;top:386.20px;line-height:18px;">5</span>
<span class="t" style="font-family:'Liberation Sans', sans-serif;font-size:13.6px;color:#000;left:1230.00px;top:404.20px;line-height:18px;">1</span>
<span class="t" style="font-family:'Liberation Sans', sans-serif;font-size:13.6px;color:#000;left:1230.00px;top:422.20px;line-height:18px;">0.5</span>
<span class="t" style="font-family:'Liberation Sans', sans-serif;font-size:13.6px;color:#000;left:1230.00px;top:440.20px;line-height:18px;">0.1</span>
<span class="t" style="font-family:'Liberation Sans', sans-serif;font-size:14px;color:#000;letter-spacing:0.602px;left:1186.70px;top:368.00px;line-height:18px;font-weight:bold;">X / Y</span>
<span class="t" style="font-family:'Liberation Sans', sans-serif;font-size:14px;color:#000;left:1252.70px;top:368.00px;line-height:18px;font-weight:bold;">Z</span>
<span class="t" style="font-family:'Liberation Sans', sans-serif;font-size:11px;color:#000;letter-spacing:-0.209px;left:1066.50px;top:557.50px;line-height:14px;">STOP Jogging on mouse up</span>
<span class="t" style="font-family:'Liberation Sans', sans-serif;font-size:11px;color:#000;letter-spacing:-0.196px;left:1076.90px;top:595.90px;line-height:14px;">Feed Hold</span>
<span class="t" style="font-family:'Liberation Sans', sans-serif;font-size:11px;color:#000;letter-spacing:0.052px;left:1089.50px;top:640.90px;line-height:14px;">Door</span>
<span class="t" style="font-family:'Liberation Sans', sans-serif;font-size:11px;color:#000;letter-spacing:-0.222px;left:1198.10px;top:618.40px;line-height:14px;">RESET</span>
<span class="t" style="font-family:'Liberation Sans', sans-serif;font-size:11px;color:#000;letter-spacing:-0.414px;left:1082.05px;top:693.90px;line-height:14px;">Resume</span>
<span class="t" style="font-family:'Liberation Sans', sans-serif;font-size:11px;color:#000;letter-spacing:-0.494px;left:1195.30px;top:693.90px;line-height:14px;">Kill Alarm</span>
<span class="t" style="font-family:'Liberation Sans', sans-serif;font-size:12px;color:#000;letter-spacing:0.049px;left:5.80px;top:739.50px;line-height:16px;">[ Import options: &lt;Remove offset&gt; &lt;Sort objects&gt; &lt;Tangential axis&gt;  ]</span>
<span class="t" style="font-family:'Liberation Sans', sans-serif;font-size:12px;color:#000;letter-spacing:-0.071px;left:384.50px;top:739.50px;line-height:16px;">[ 1 elements imported, duration: 00:00.22 minutes ]</span>
<div style="left:1127px;top:450px;width:17px;height:17px;background:#ffa500;border-radius:50%"></div>
<div style="left:1228px;top:450px;width:37px;height:17px;background:#ffa500;border-radius:13px/8.5px"></div>
</body></html>
